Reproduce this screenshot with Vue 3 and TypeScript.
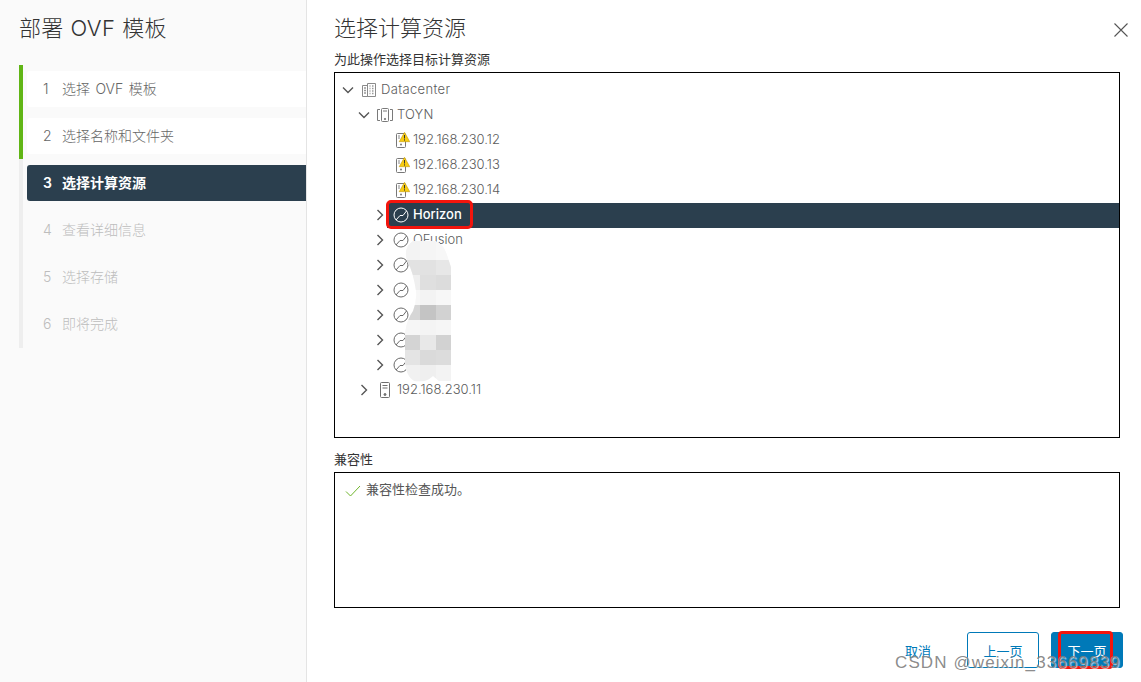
<script setup lang="ts">
interface Row { label: string; level: number; kind: 'dc' | 'cluster' | 'warn' | 'pool' | 'host'; chevron: 'open' | 'closed' | 'none'; selected?: boolean }

const steps = [
  { n: 1, label: '选择 OVF 模板', state: 'done' },
  { n: 2, label: '选择名称和文件夹', state: 'done' },
  { n: 3, label: '选择计算资源', state: 'active' },
  { n: 4, label: '查看详细信息', state: 'todo' },
  { n: 5, label: '选择存储', state: 'todo' },
  { n: 6, label: '即将完成', state: 'todo' },
]

const rows: Row[] = [
  { label: 'Datacenter', level: 0, kind: 'dc', chevron: 'open' },
  { label: 'TOYN', level: 1, kind: 'cluster', chevron: 'open' },
  { label: '192.168.230.12', level: 2, kind: 'warn', chevron: 'none' },
  { label: '192.168.230.13', level: 2, kind: 'warn', chevron: 'none' },
  { label: '192.168.230.14', level: 2, kind: 'warn', chevron: 'none' },
  { label: 'Horizon', level: 2, kind: 'pool', chevron: 'closed', selected: true },
  { label: 'OFusion', level: 2, kind: 'pool', chevron: 'closed' },
  { label: '', level: 2, kind: 'pool', chevron: 'closed' },
  { label: '', level: 2, kind: 'pool', chevron: 'closed' },
  { label: '', level: 2, kind: 'pool', chevron: 'closed' },
  { label: '', level: 2, kind: 'pool', chevron: 'closed' },
  { label: '', level: 2, kind: 'pool', chevron: 'closed' },
  { label: '192.168.230.11', level: 1, kind: 'host', chevron: 'closed' },
]

const mosaic = [
  ['#f3f3f3', '#f5f5f5', '#f7f7f7'],
  ['#e2e2e2', '#e2e2e2', '#e7e7e7'],
  ['#efefef', '#dfdfdf', '#dcdcdc'],
  ['#f7f7f7', '#f3f3f3', '#f7f7f7'],
  ['#d6d6d6', '#c4c4c4', '#d2d2d2'],
  ['#f6f6f6', '#f4f4f4', '#f6f6f6'],
  ['#d4d4d4', '#e8e8e8', '#d2d2d2'],
  ['#e4e4e4', '#dadada', '#dcdcdc'],
  ['#f1f1f1', '#efefef', '#f3f3f3'],
]
</script>

<template>
  <div class="page">
    <aside class="side">
      <h1 class="side-title">部署 OVF 模板</h1>
      <ol class="steps">
        <li v-for="s in steps" :key="s.n" class="step" :class="s.state">
          <span class="num">{{ s.n }}</span><span>{{ s.label }}</span>
        </li>
      </ol>
    </aside>

    <main class="main">
      <header class="head">
        <h2 class="title">选择计算资源</h2>
        <svg class="close" width="16" height="16" viewBox="0 0 16 16" aria-label="关闭">
          <path d="M1.5 1.5 14.5 14.5M14.5 1.5 1.5 14.5" stroke="#555" stroke-width="1.1" fill="none" />
        </svg>
      </header>
      <div class="label first">为此操作选择目标计算资源</div>
      <div class="tree">
        <div
          v-for="(r, i) in rows"
          :key="i"
          class="row"
          :class="['lv' + r.level, 'k-' + r.kind, { selected: r.selected }]"
        >
          <span class="chev">
            <svg v-if="r.chevron === 'open'" width="12" height="12" viewBox="0 0 12 12">
              <path d="M1 3.5 6 8.500 11 3.500" fill="none" stroke="#565656" stroke-width="1.400" />
            </svg>
            <svg v-else-if="r.chevron === 'closed'" width="12" height="12" viewBox="0 0 12 12">
              <path d="M3.500 1 8.500 6 3.500 11" fill="none" stroke="#565656" stroke-width="1.400" />
            </svg>
          </span>
          <span class="ico">
            <svg v-if="r.kind === 'dc'" width="16" height="16" viewBox="0 0 16 16" fill="none" stroke="#8a8a8a">
              <path d="M1.500 3.500h5v11h-5zM6.500 1.500h8v13h-8z" />
              <path d="M8.500 4h1M11 4h1.500M8.500 6.500h1M11 6.500h1.500M8.500 9h1M11 9h1.500M8.500 11.500h1M11 11.500h1.500M3 6h2M3 8.500h2M3 11h2" stroke="#999" stroke-width="1.500" />
            </svg>
            <svg v-else-if="r.kind === 'cluster'" width="16" height="16" viewBox="0 0 16 16" fill="none" stroke="#7a7a7a">
              <rect x="4.500" y="1.500" width="7" height="13" rx="1" />
              <path d="M6 4h4" />
              <circle cx="8" cy="12" r=".7" fill="#7a7a7a" />
              <path d="M3 2.500H.5v11H3M13 2.500h2.500v11H13" />
            </svg>
            <svg v-else-if="r.kind === 'warn'" width="17" height="16" viewBox="0 0 17 16" fill="none">
              <rect x="3.500" y="1.500" width="9" height="14" rx="1" stroke="#777" fill="#fff" />
              <path d="M5 4h2M5 6h2" stroke="#888" />
              <circle cx="8" cy="12.500" r="1" fill="#777" />
              <path d="M11.500 .3 16.800 9.700H6.200z" fill="#f8cc10" stroke="#b98f00" stroke-width=".5" />
              <path d="M11.500 3v3.500M11.500 7.300v1.300" stroke="#333" stroke-width="1" />
            </svg>
            <svg v-else-if="r.kind === 'pool'" width="16" height="16" viewBox="0 0 16 16" fill="none" :stroke="r.selected ? '#fff' : '#6a6a6a'">
              <circle cx="8" cy="8" r="7" />
              <path d="M3 13 7 8.500H10L13.500 4" />
            </svg>
            <svg v-else width="16" height="16" viewBox="0 0 16 16" fill="none" stroke="#6f6f6f">
              <rect x="3.500" y=".5" width="9" height="15" rx="1" />
              <path d="M5.500 3.500h5M5.500 6h5" />
              <circle cx="8" cy="12.500" r="1" fill="#6f6f6f" />
            </svg>
          </span>
          <span class="txt">{{ r.label }}</span>
        </div>
        <div class="redact" aria-hidden="true">
          <div v-for="(line, y) in mosaic" :key="y" class="m-row">
            <i v-for="(c, x) in line" :key="x" :style="{ background: c }"></i>
          </div>
        </div>
        <div class="mark-h"></div>
      </div>

      <div class="label second">兼容性</div>
      <div class="compat">
        <svg width="16" height="12" viewBox="0 0 16 12" fill="none">
          <path d="M1 6.500 5.500 11 15 1" stroke="#6fb52c" stroke-width="1" />
        </svg>
        <span>兼容性检查成功。</span>
      </div>

      <footer class="foot">
        <button class="btn link">取消</button>
        <button class="btn outline">上一页</button>
        <button class="btn primary">下一页<span class="mark-b"></span></button>
      </footer>
      <div class="wm">CSDN @weixin_33669839</div>
    </main>
  </div>
</template>

<style>
html, body { margin: 0; background: #fff; }
</style>

<style scoped>
.page {
  display: flex;
  width: 1141px;
  height: 682px;
  overflow: hidden;
  position: relative;
  font-family: Inter, "Noto Sans CJK SC", sans-serif;
  color: #565656;
}
.side {
  flex: none;
  background: #fafafa;
  border-right: 1px solid #e4e4e4;
  padding-left: 19px;
  box-sizing: content-box;
  width: 287px;
}
.side-title {
  margin: 0;
  height: 65px;
  font-size: 22px;
  font-weight: 300;
  line-height: 57px;
  color: #333;
  letter-spacing: .3px;
  word-spacing: .5px;
}
.steps {
  list-style: none;
  margin: 0;
  padding: 6px 0 0 4px;
  height: 277px;
  border-left: 4px solid #eeeeee;
  box-sizing: content-box;
  position: relative;
  display: flex;
  flex-direction: column;
  gap: 11px;
}
.steps::before {
  content: "";
  position: absolute;
  left: -4px;
  top: 0;
  width: 4px;
  height: 94px;
  background: #60b515;
}
.step {
  height: 36px;
  line-height: 35px;
  padding-left: 16px;
  font-size: 14px;
  font-weight: 300;
  word-spacing: 1.500px;
  border-radius: 3px 0 0 3px;
  display: flex;
  color: #666;
}
.num { width: 19px; flex: none; }
.step.done { background: #fff; }
.step.active { background: #2b3f4e; color: #fff; font-weight: 600; }
.step.todo { color: #bdbdbd; }

.main {
  flex: 1;
  padding-left: 27px;
  position: relative;
}
.head {
  height: 50px;
  display: flex;
  justify-content: space-between;
  width: 795px;
}
.title {
  margin: 0;
  font-size: 22px;
  font-weight: 300;
  line-height: 56px;
  color: #333;
}
.close { margin-top: 22px; }
.label { font-size: 13px; color: #333; line-height: 18px; }
.label.first { height: 22px; }
.label.second { margin-top: 12px; height: 22px; }
.tree {
  width: 784px;
  border: 1px solid #000;
  padding-top: 5px;
  box-sizing: content-box;
  height: 359px;
  position: relative;
  overflow: hidden;
}
.row {
  height: 25px;
  box-sizing: border-box;
  padding-bottom: 2px;
  display: flex;
  align-items: center;
  font-size: 13px;
  font-weight: 300;
  color: #5c5c5c;
  white-space: nowrap;
}
.k-dc { letter-spacing: .35px; }
.k-cluster { letter-spacing: .15px; }
.k-warn, .k-host { letter-spacing: 0; }
.lv0 { padding-left: 7px; }
.lv1 { padding-left: 23px; }
.lv2 { padding-left: 39px; }
.chev { width: 12px; height: 12px; flex: none; margin-right: 7px; display: flex; }
.ico { width: 16px; height: 16px; flex: none; margin-right: 4px; display: flex; }
.ico svg { flex: none; }
.txt { margin-bottom: 2px; }
.row.selected { background: #2b3f4e; color: #fff; margin-left: 52px; padding-left: 0; position: relative; font-weight: 500; }
.row.selected .chev { position: absolute; left: -13px; margin: 0; }
.row.selected .ico { margin-left: 6px; }
.mark-h {
  position: absolute;
  left: 51px;
  top: 127px;
  width: 81px;
  height: 23px;
  border: 3px solid #f3150d;
  border-radius: 5px;
  box-sizing: content-box;
}
.redact {
  position: absolute;
  left: 70px;
  top: 168px;
  width: 46px;
  height: 141px;
  background: #fbfbfb;
  clip-path: path("M8 0H30Q38 2 42 14L46 26V140H34L28 135Q22 141 12 141Q1 138 0 120V92Q2 78 8 70Q12 60 11 50Q8 30 2 20Q-2 6 8 0Z");
}
.m-row { display: flex; height: 15px; }
.m-row:first-child { height: 19px; }
.m-row:last-child { height: 16px; }
.m-row i { flex: 1; }
.compat {
  width: 774px;
  border: 1px solid #000;
  padding: 8px 0 0 10px;
  box-sizing: content-box;
  height: 126px;
  display: flex;
  align-items: flex-start;
  gap: 5px;
  font-size: 13px;
  line-height: 16px;
  color: #565656;
}
.compat svg { margin-top: 4px; }
.foot {
  display: flex;
  align-items: center;
  margin-top: 24px;
  width: 789px;
}
.btn {
  font-family: inherit;
  font-size: 13px;
  height: 36px;
  width: 72px;
  border-radius: 3px;
  padding: 0;
  background: #fff;
  color: #0079b8;
  border: 1px solid #0079b8;
  margin-left: 12px;
  position: relative;
}
.btn.link { border: 0; background: none; width: 26px; margin-left: 571px; margin-right: 24px; }
.btn.outline { margin-left: 12px; }
.btn.primary { background: #0079b8; color: #fff; }
.mark-b {
  position: absolute;
  left: 6px;
  top: -2px;
  width: 49px;
  height: 32px;
  border: 3px solid #f3150d;
  border-radius: 4px;
}
.wm {
  position: absolute;
  left: 588px;
  top: 653px;
  font-family: "Liberation Sans", sans-serif;
  font-size: 17px;
  line-height: 20px;
  color: rgba(125, 125, 125, .9);
  letter-spacing: 1.100px;
  text-shadow: 1px 1px 1px rgba(255, 255, 255, .7);
  white-space: nowrap;
}
</style>
